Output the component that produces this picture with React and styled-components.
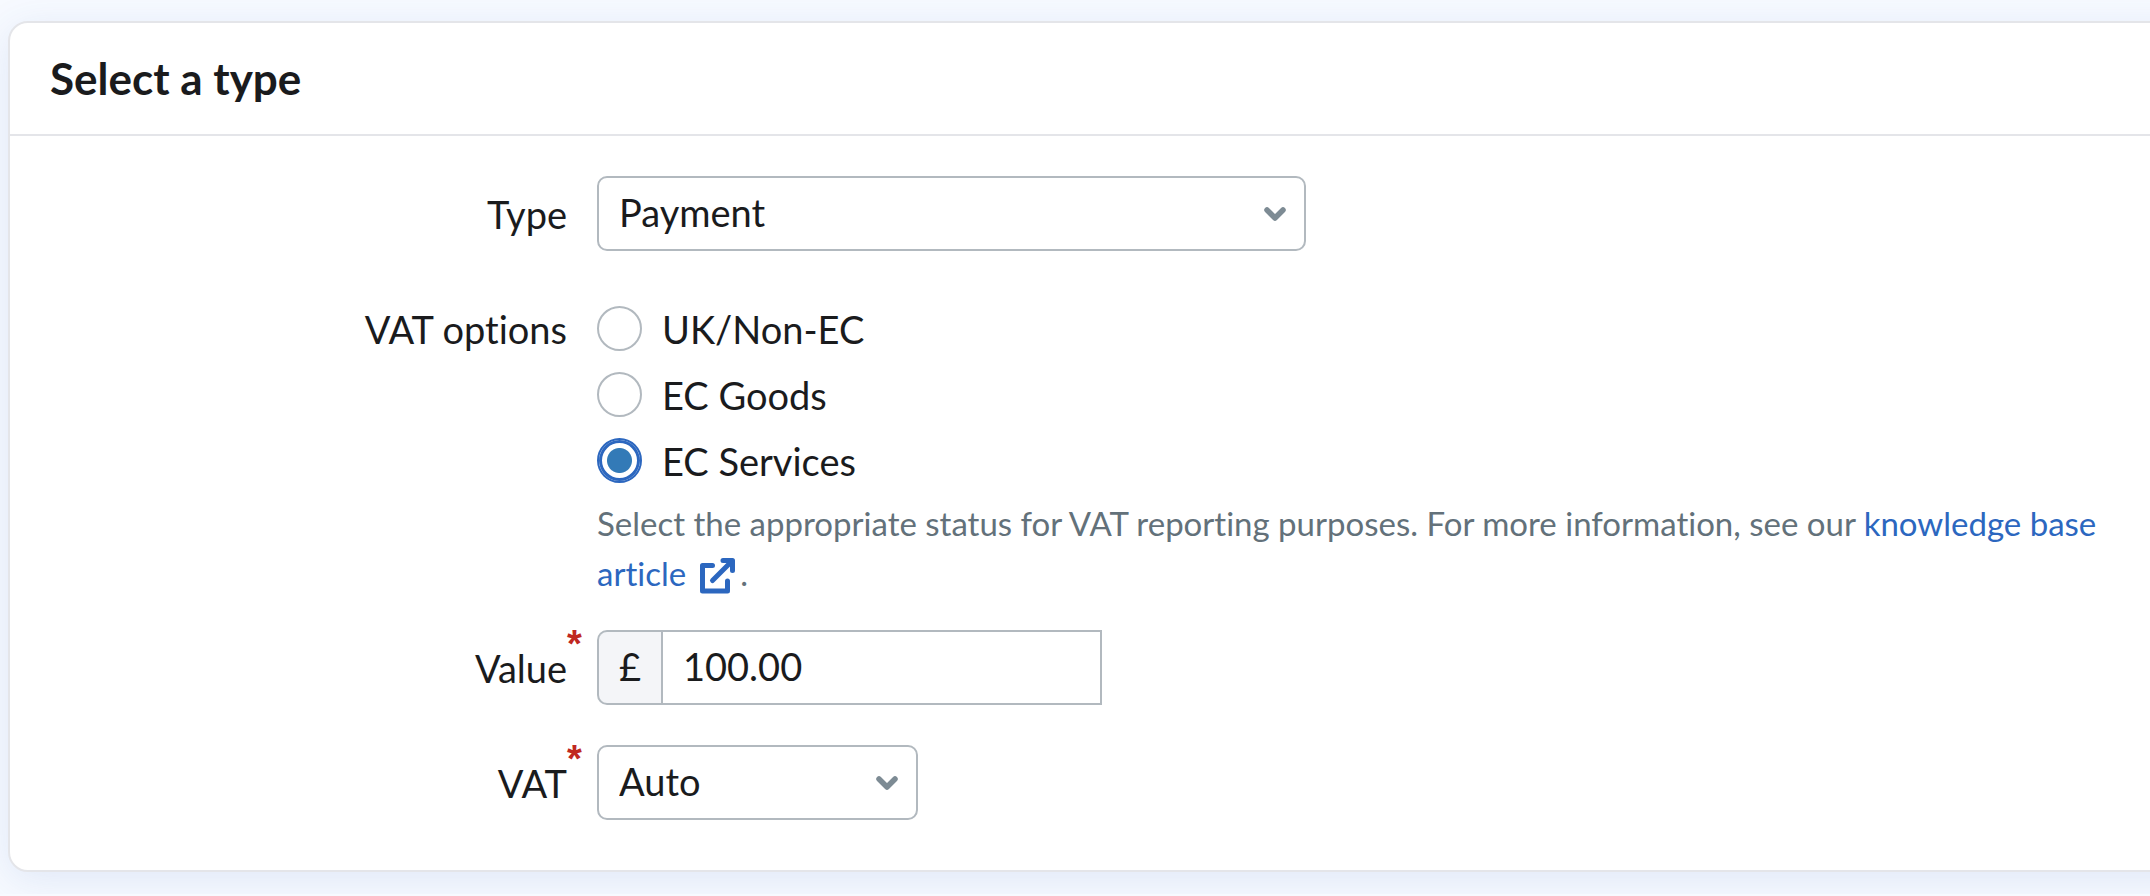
import React, { useState } from 'react'
import styled, { createGlobalStyle } from 'styled-components'

const GlobalStyle = createGlobalStyle`
    *{
        box-sizing:border-box;
    }
    body{
        margin:0;
        background-color:#f7faff;
        color:#1a1b1d;
        font-family:Lato, 'Liberation Sans', sans-serif;
        font-size:38px;
        font-variant-ligatures:none;
        line-height:50px;
    }
`

const Page = styled.main`
    padding:21px 0 22px 8px;
    overflow:hidden;
`

const Card = styled.section`
    margin-right:-60px;
    background-color:#fff;
    border:2px solid #e4e5e9;
    border-radius:20px;
    box-shadow:0 8px 40px rgba(60, 100, 190, .12);
`

const CardHeader = styled.header`
    display:flex;
    align-items:center;
    height:113px;
    padding:0 40px 2px;
    border-bottom:2px solid #e4e5e9;
`

const Title = styled.h2`
    margin:0;
    font-size:44px;
    font-weight:bold;
`

const Form = styled.form`
    padding:40px 100px 50px 0;
`

const Row = styled.div`
    display:grid;
    grid-template-columns:557px 1fr;
    column-gap:30px;
    margin-bottom:${props => props.gap || '0'};
`

const Label = styled.label`
    display:flex;
    align-items:center;
    justify-content:flex-end;
    height:${props => props.height || '75px'};
`

const LabelText = styled.span`
    position:relative;
`

const Required = styled.span`
    position:absolute;
    left:100%;
    top:-24px;
    color:#c0281f;
    font-family:'Liberation Sans', sans-serif;
    font-weight:bold;
`

const SelectWrapper = styled.div`
    position:relative;
    width:${props => props.width};
    max-width:100%;

    & > svg{
        position:absolute;
        right:20px;
        top:31px;
        pointer-events:none;
    }
`

const Select = styled.select`
    display:block;
    width:100%;
    height:75px;
    padding:0 60px 4px 20px;
    border:2px solid #b2b9bf;
    border-radius:10px;
    background-color:#fff;
    color:inherit;
    font:inherit;
    appearance:none;
`

const RadioList = styled.div`
    display:flex;
    flex-direction:column;
    gap:21px;
    margin-bottom:15px;
`

const RadioLabel = styled.label`
    display:flex;
    align-items:center;
    gap:20px;
    height:45px;
`

const Radio = styled.input`
    flex:none;
    width:45px;
    height:45px;
    margin:0;
    border:2px solid #b2b9bf;
    border-radius:50%;
    background-color:#fff;
    appearance:none;

    &:checked{
        border-color:#2c67bf;
        box-shadow:inset 0 0 0 3px #2c67bf;
        background-image:radial-gradient(circle, #337ab7 12px, transparent 13px);
        background-origin:border-box;
    }
`

const HelpText = styled.p`
    max-width:1520px;
    margin:0;
    color:#63717a;
    font-size:33px;
`

const HelpLink = styled.a`
    color:#2c67bf;
    text-decoration:none;

    & > svg{
        margin:0 5px 0 14px;
        vertical-align:-8px;
    }
`

const InputGroup = styled.div`
    display:flex;
    width:505px;
    max-width:100%;
    height:75px;
`

const Prefix = styled.span`
    display:flex;
    align-items:center;
    justify-content:center;
    width:64px;
    padding-bottom:4px;
    border:2px solid #b2b9bf;
    border-right:0;
    border-radius:10px 0 0 10px;
    background-color:#f4f5f8;
`

const Input = styled.input`
    flex:1;
    min-width:0;
    padding:0 20px 4px;
    border:2px solid #b2b9bf;
    border-radius:0;
    color:inherit;
    font:inherit;
`

const Chevron = () => (
    <svg width="22" height="14" viewBox="0 0 22 14" aria-hidden="true">
        <path d="M3 3L11 11L19 3" fill="none" stroke="#7d8b94" strokeWidth="5.5" strokeLinecap="round" strokeLinejoin="round" />
    </svg>
)

const ExternalIcon = () => (
    <svg width="35" height="36" viewBox="0 0 35 36" fill="none" stroke="currentColor" strokeWidth="5" strokeLinecap="round" strokeLinejoin="round" aria-hidden="true">
        <path d="M12.5 7.5H2.5V33H27.5V23" />
        <path d="M12.5 22.5L31 4" />
        <path d="M23 2.5H32.5V12.5" />
    </svg>
)

const vatOptions = ['UK/Non-EC', 'EC Goods', 'EC Services']

const App = () => {
    const [vatOption, setVatOption] = useState('EC Services')

    return (
        <Page>
            <GlobalStyle />
            <Card>
                <CardHeader>
                    <Title>Select a type</Title>
                </CardHeader>
                <Form>
                    <Row gap="55px">
                        <Label htmlFor="type">Type</Label>
                        <SelectWrapper width="709px">
                            <Select id="type">
                                <option>Payment</option>
                            </Select>
                            <Chevron />
                        </SelectWrapper>
                    </Row>
                    <Row gap="32px" role="radiogroup" aria-labelledby="vat-options">
                        <Label as="span" id="vat-options" height="45px">VAT options</Label>
                        <div>
                            <RadioList>
                                {vatOptions.map(option => (
                                    <RadioLabel key={option}>
                                        <Radio
                                            type="radio"
                                            name="vatOption"
                                            checked={vatOption === option}
                                            onChange={() => setVatOption(option)}
                                        />
                                        {option}
                                    </RadioLabel>
                                ))}
                            </RadioList>
                            <HelpText>
                                Select the appropriate status for VAT reporting purposes. For more information, see our{' '}
                                <HelpLink href="#">knowledge base article<ExternalIcon /></HelpLink>.
                            </HelpText>
                        </div>
                    </Row>
                    <Row gap="40px">
                        <Label htmlFor="value">
                            <LabelText>Value<Required>*</Required></LabelText>
                        </Label>
                        <InputGroup>
                            <Prefix>£</Prefix>
                            <Input id="value" type="text" defaultValue="100.00" />
                        </InputGroup>
                    </Row>
                    <Row>
                        <Label htmlFor="vat">
                            <LabelText>VAT<Required>*</Required></LabelText>
                        </Label>
                        <SelectWrapper width="321px">
                            <Select id="vat">
                                <option>Auto</option>
                            </Select>
                            <Chevron />
                        </SelectWrapper>
                    </Row>
                </Form>
            </Card>
        </Page>
    )
}

export default App
